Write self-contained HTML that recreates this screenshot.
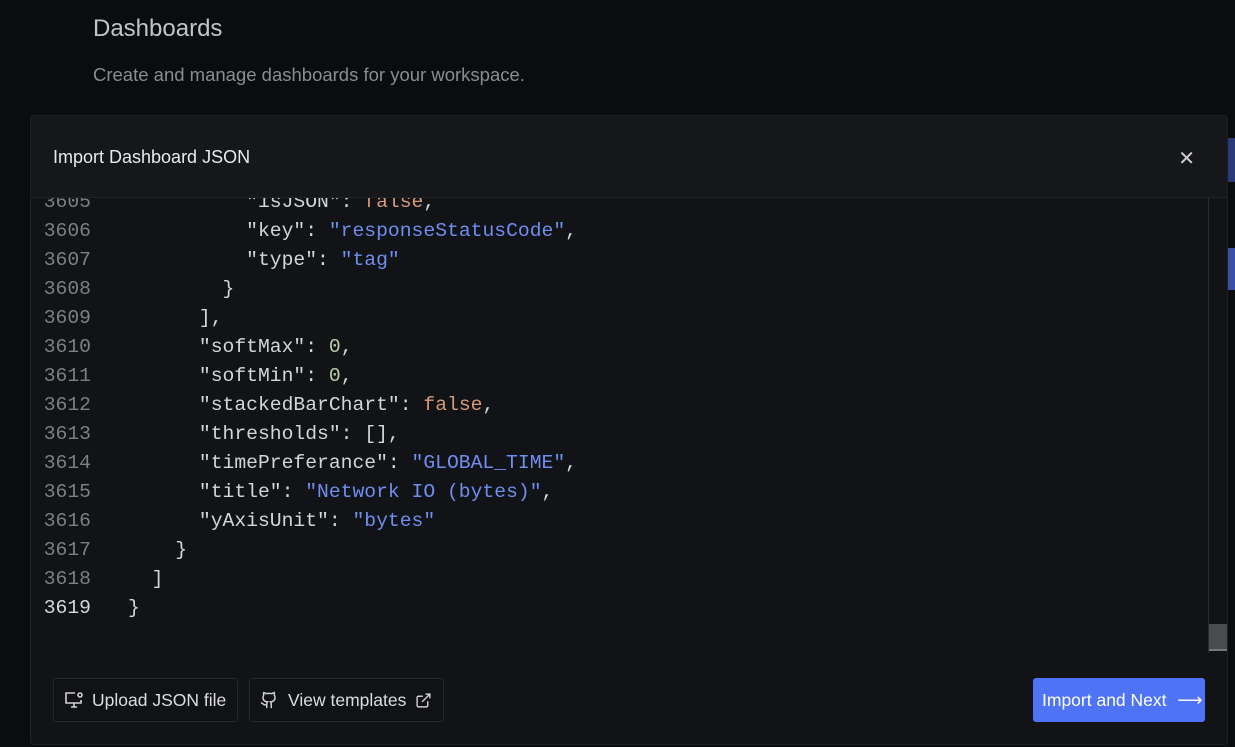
<!DOCTYPE html>
<html><head><meta charset="utf-8"><style>
*{margin:0;padding:0;box-sizing:border-box}
body{width:1235px;height:747px;overflow:hidden;background:#0b0c0e;font-family:"Liberation Sans",sans-serif;position:relative}
.h1{position:absolute;left:93px;top:15px;font-size:24px;color:#c3c4c7}
.sub{position:absolute;left:93px;top:64px;font-size:18.5px;color:#8a8c90}
.bl1{position:absolute;left:1226px;top:138px;width:9px;height:44px;background:#2a3a78}
.bl2{position:absolute;left:1226px;top:248px;width:9px;height:42px;background:#3a4fa8}
.modal{position:absolute;left:30px;top:115px;width:1198px;height:630px;background:#121317;border:1px solid #1e2025;border-radius:4px;overflow:hidden}
.hdr{position:absolute;left:0;top:0;width:100%;height:82px;background:#16171b;border-bottom:1px solid #202227;z-index:2}
.hdr span{position:absolute;left:22px;top:31px;font-size:18px;color:#e8e9eb}
.x{position:absolute;right:32px;top:30px;color:#d0d0d0;font-size:20px}
.code{position:absolute;left:0;top:72px;width:1178px;height:465px;font-family:"Liberation Mono",monospace;font-size:19.7px;overflow:hidden;background:#121317;border-right:1px solid #2a2c31}
.ln{position:absolute;left:0;top:0}
.row{height:29px;line-height:29px;white-space:pre;position:relative}
.n{display:inline-block;width:60px;text-align:right;color:#7d7f84;margin-right:37px}
.n.c{color:#d6d7d9}
.t{color:#d4d5d7}
.s{color:#6e8ef0}
.f{color:#d69a76}
.d{color:#b9cca6}
.sb{position:absolute;left:1178px;top:508px;width:20px;height:27px;background:#4a4b4e;border-bottom:2px solid #777}
.foot{position:absolute;left:0;top:538px;width:100%;height:92px}
.btn{position:absolute;top:24px;height:44px;border:1px solid #25272c;border-radius:3px;color:#dcdde0;font-size:17.5px;line-height:42px;background:#111216}
.pri{position:absolute;right:22px;top:24px;width:172px;height:44px;background:#4e73f5;border-radius:3px;color:#fff;font-size:17.5px;line-height:44px;padding-left:9px}
</style></head><body>
<div class="h1">Dashboards</div>
<div class="sub">Create and manage dashboards for your workspace.</div>
<div class="bl1"></div><div class="bl2"></div>
<div class="modal">
<div class="hdr"><span>Import Dashboard JSON</span><div class="x">✕</div></div>
<div class="code"><div class="ln">
<div class="row"><span class="n">3605</span><span class="t">          "isJSON": </span><span class="f">false</span><span class="t">,</span></div>
<div class="row"><span class="n">3606</span><span class="t">          "key": </span><span class="s">"responseStatusCode"</span><span class="t">,</span></div>
<div class="row"><span class="n">3607</span><span class="t">          "type": </span><span class="s">"tag"</span></div>
<div class="row"><span class="n">3608</span><span class="t">        }</span></div>
<div class="row"><span class="n">3609</span><span class="t">      ],</span></div>
<div class="row"><span class="n">3610</span><span class="t">      "softMax": </span><span class="d">0</span><span class="t">,</span></div>
<div class="row"><span class="n">3611</span><span class="t">      "softMin": </span><span class="d">0</span><span class="t">,</span></div>
<div class="row"><span class="n">3612</span><span class="t">      "stackedBarChart": </span><span class="f">false</span><span class="t">,</span></div>
<div class="row"><span class="n">3613</span><span class="t">      "thresholds": [],</span></div>
<div class="row"><span class="n">3614</span><span class="t">      "timePreferance": </span><span class="s">"GLOBAL_TIME"</span><span class="t">,</span></div>
<div class="row"><span class="n">3615</span><span class="t">      "title": </span><span class="s">"Network IO (bytes)"</span><span class="t">,</span></div>
<div class="row"><span class="n">3616</span><span class="t">      "yAxisUnit": </span><span class="s">"bytes"</span></div>
<div class="row"><span class="n">3617</span><span class="t">    }</span></div>
<div class="row"><span class="n">3618</span><span class="t">  ]</span></div>
<div class="row"><span class="n c">3619</span><span class="t">}</span></div>
</div></div>
<div class="sb"></div>
<div class="foot">
<div class="btn" style="left:22px;width:185px;padding-left:10px">
<svg width="20" height="18" viewBox="0 0 20 18" style="vertical-align:-3px;margin-right:8px" fill="none" stroke="#d0d0d0" stroke-width="1.6"><path d="M11 2H2v10h15V9"/><path d="M7 16h6M10 12v4"/><circle cx="16" cy="4" r="2"/></svg>Upload JSON file</div>
<div class="btn" style="left:218px;width:195px;padding-left:10px">
<svg width="18" height="18" viewBox="0 0 24 24" style="vertical-align:-3px;margin-right:10px" fill="none" stroke="#d0d0d0" stroke-width="2" stroke-linecap="round"><path d="M15 22v-4a4.8 4.8 0 0 0-1-3.5c3 0 6-2 6-5.5.08-1.25-.27-2.48-1-3.5.28-1.15.28-2.350 0-3.5 0 0-1 0-3 1.5-2.64-.5-5.36-.5-8 0C6 2 5 2 5 2c-.3 1.15-.3 2.35 0 3.5A5.4 5.4 0 0 0 4 9c0 3.5 3 5.5 6 5.5-.39.49-.68 1.050-.85 1.65S8.93 17.38 9 18v4"/><path d="M9 18c-4.51 2-5-2-7-2"/></svg>View templates
<svg width="17" height="17" viewBox="0 0 24 24" style="vertical-align:-3px;margin-left:4px" fill="none" stroke="#d0d0d0" stroke-width="2"><path d="M18 13v6a2 2 0 0 1-2 2H5a2 2 0 0 1-2-2V8a2 2 0 0 1 2-2h6M15 3h6v6M10 14L21 3"/></svg></div>
<div class="pri">Import and Next <span style="margin-left:6px">⟶</span></div>
</div>
</div>
</body></html>
